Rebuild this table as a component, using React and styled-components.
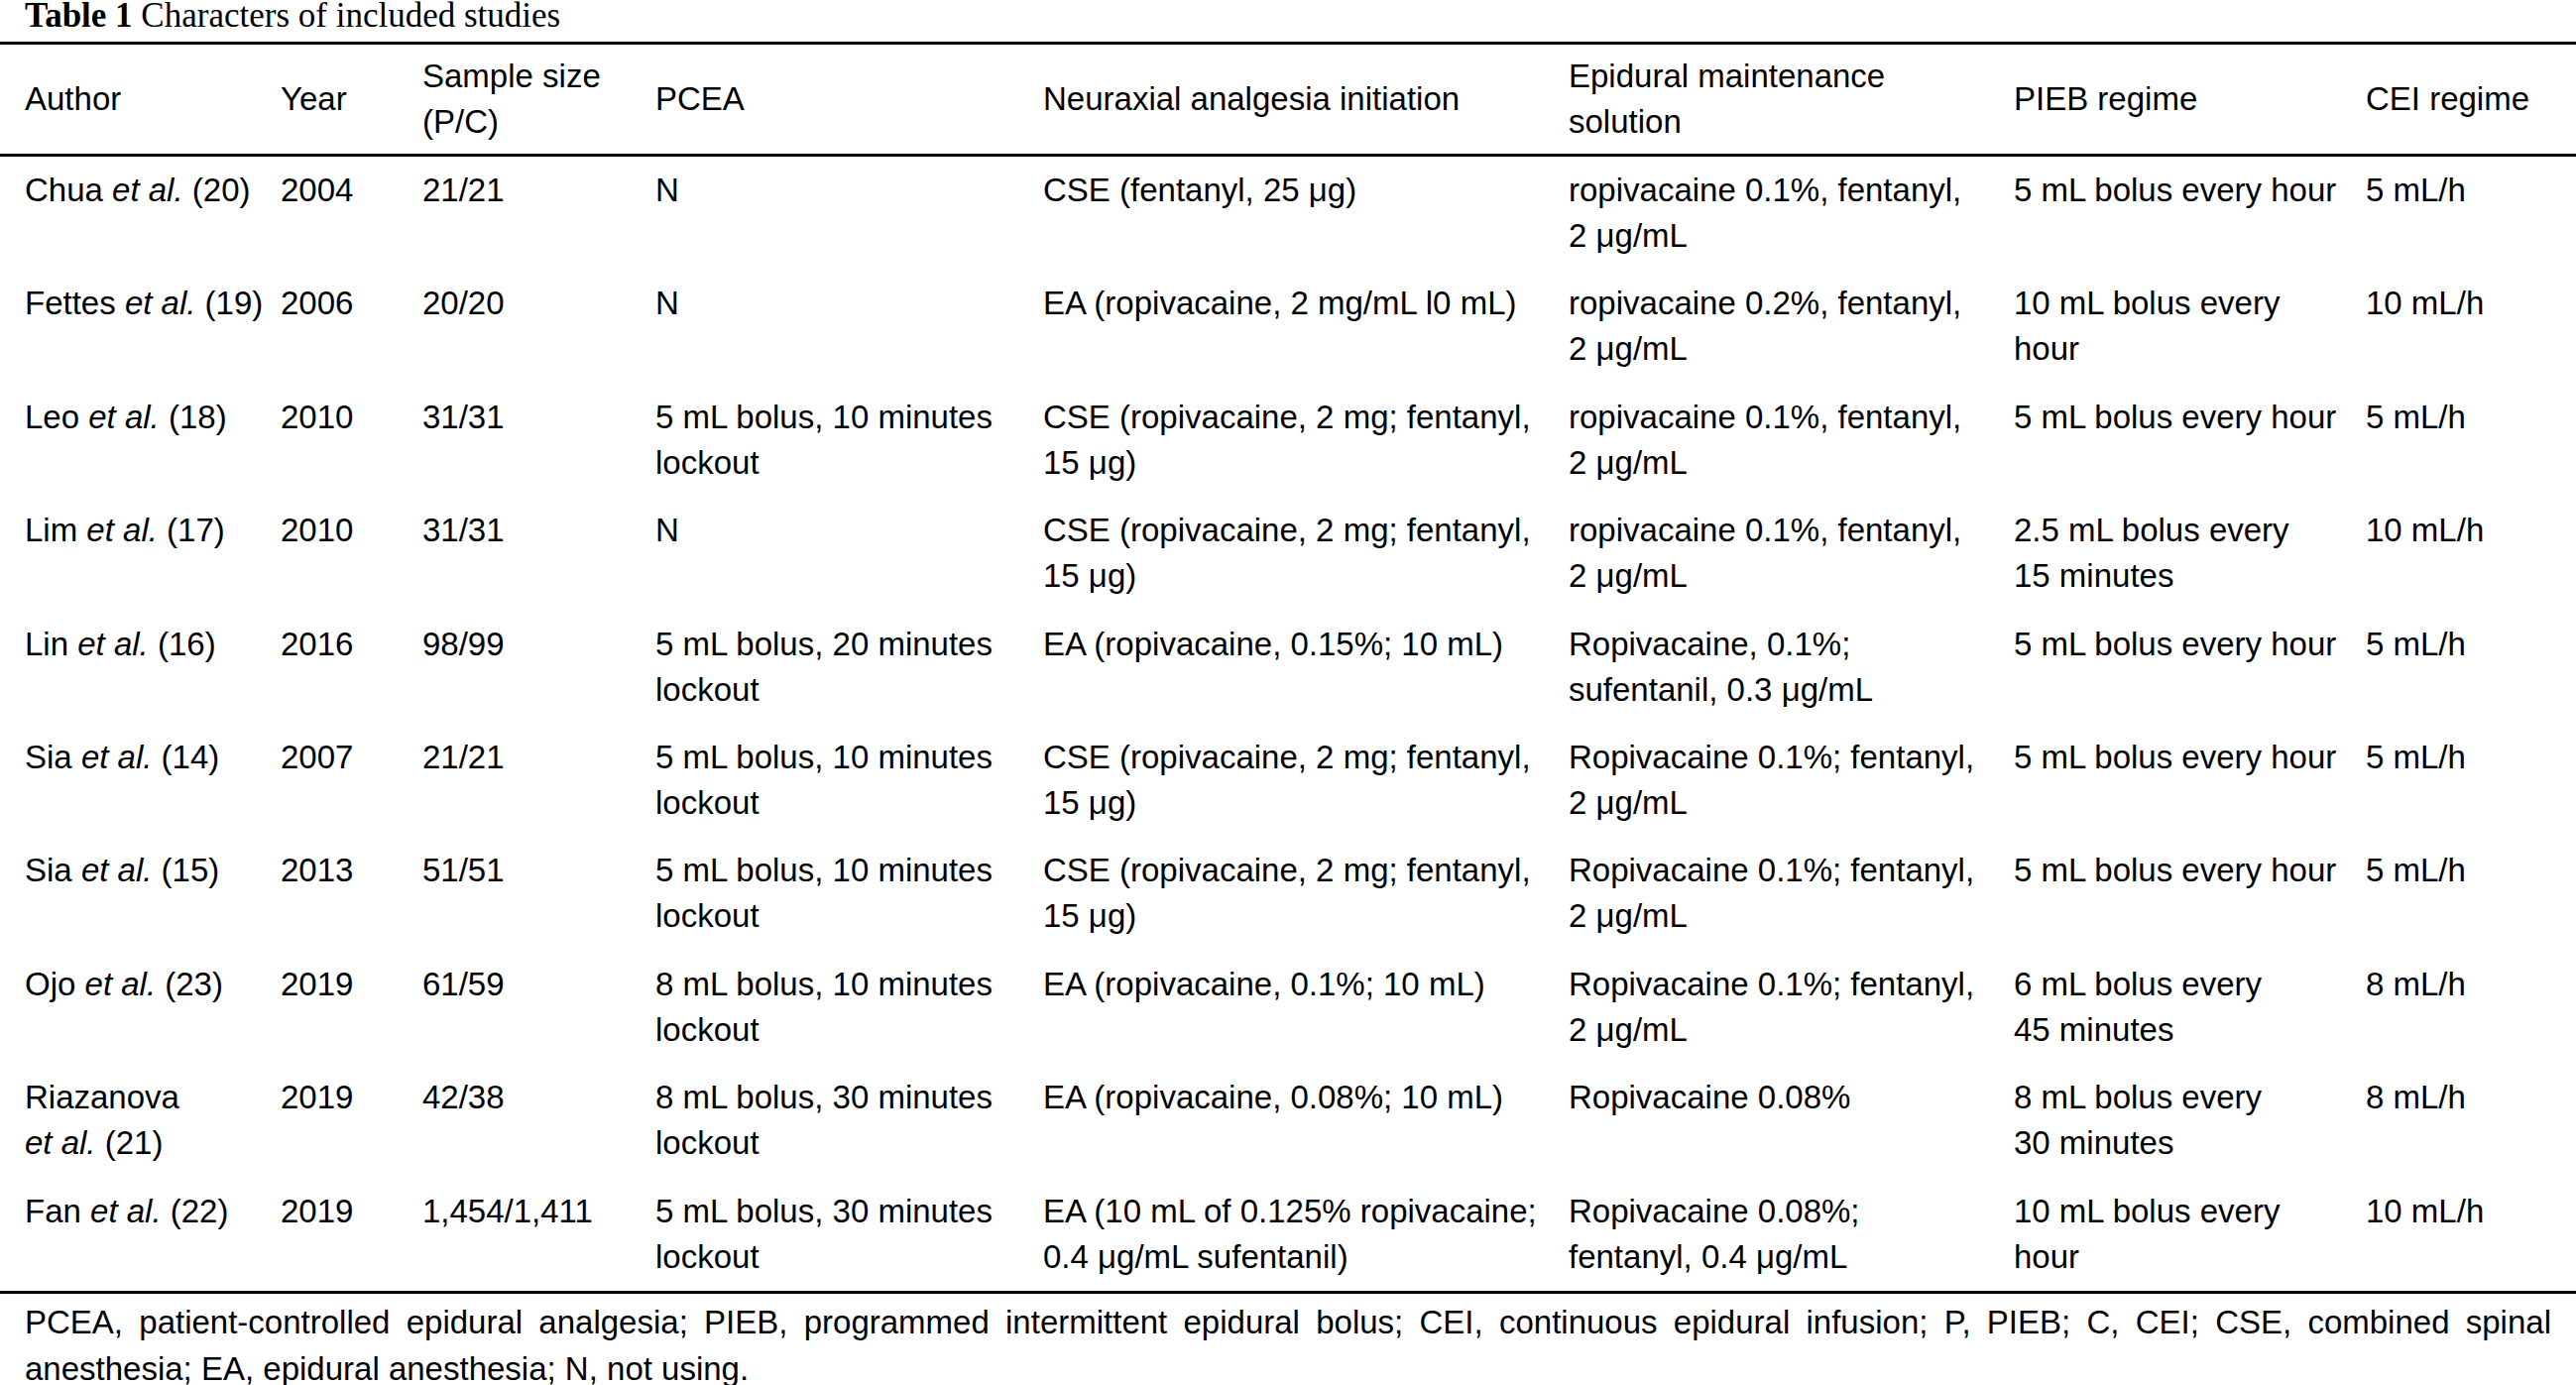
import React from 'react';
import styled, { createGlobalStyle } from 'styled-components';

const GlobalStyle = createGlobalStyle`
  html, body {
    margin: 0;
    padding: 0;
    background: #ffffff;
  }
  body {
    font-family: "Liberation Sans", Arial, sans-serif;
    color: #000;
  }
`;

const Page = styled.div`
  width: 2598px;
`;

const Caption = styled.div`
  height: 42px;
  padding-left: 25px;
  font-family: "Liberation Serif", "Times New Roman", serif;
  font-size: 35px;
  line-height: 32px;
  white-space: nowrap;

  b {
    font-weight: 700;
  }
`;

const Table = styled.table`
  width: 100%;
  table-layout: fixed;
  border-collapse: collapse;
  border-top: 3px solid #000;
  border-bottom: 3px solid #000;
  font-size: 33px;
  line-height: 46px;
`;

const HeadRow = styled.tr`
  border-bottom: 3px solid #000;
`;

const HeadCell = styled.th`
  text-align: left;
  font-weight: 400;
  vertical-align: middle;
  white-space: nowrap;
  padding: 9px 0 9px ${p => (p.$first ? '25px' : '0')};
`;

const Cell = styled.td`
  vertical-align: top;
  white-space: nowrap;
  padding: 11px 0 11.4px ${p => (p.$first ? '25px' : '0')};
`;

const Footnote = styled.div`
  padding: 5px 25px 0;
  font-size: 33px;
  line-height: 47px;
`;

const FootLine = styled.div`
  text-align: ${p => (p.$justify ? 'justify' : 'left')};
  text-align-last: ${p => (p.$justify ? 'justify' : 'left')};
  white-space: nowrap;
`;

const columns = [283, 143, 235, 391, 530, 449, 355, 212];

const headers = [
  ['Author'],
  ['Year'],
  ['Sample size', '(P/C)'],
  ['PCEA'],
  ['Neuraxial analgesia initiation'],
  ['Epidural maintenance', 'solution'],
  ['PIEB regime'],
  ['CEI regime'],
];

const author = (name, ref) => (
  <>
    {name} <em>et al.</em> ({ref})
  </>
);

const CSE_ROPI = ['CSE (ropivacaine, 2 mg; fentanyl,', '15 μg)'];

const rows = [
  [[author('Chua', 20)], ['2004'], ['21/21'], ['N'], ['CSE (fentanyl, 25 μg)'], ['ropivacaine 0.1%, fentanyl,', '2 μg/mL'], ['5 mL bolus every hour'], ['5 mL/h']],
  [[author('Fettes', 19)], ['2006'], ['20/20'], ['N'], ['EA (ropivacaine, 2 mg/mL l0 mL)'], ['ropivacaine 0.2%, fentanyl,', '2 μg/mL'], ['10 mL bolus every', 'hour'], ['10 mL/h']],
  [[author('Leo', 18)], ['2010'], ['31/31'], ['5 mL bolus, 10 minutes', 'lockout'], CSE_ROPI, ['ropivacaine 0.1%, fentanyl,', '2 μg/mL'], ['5 mL bolus every hour'], ['5 mL/h']],
  [[author('Lim', 17)], ['2010'], ['31/31'], ['N'], CSE_ROPI, ['ropivacaine 0.1%, fentanyl,', '2 μg/mL'], ['2.5 mL bolus every', '15 minutes'], ['10 mL/h']],
  [[author('Lin', 16)], ['2016'], ['98/99'], ['5 mL bolus, 20 minutes', 'lockout'], ['EA (ropivacaine, 0.15%; 10 mL)'], ['Ropivacaine, 0.1%;', 'sufentanil, 0.3 μg/mL'], ['5 mL bolus every hour'], ['5 mL/h']],
  [[author('Sia', 14)], ['2007'], ['21/21'], ['5 mL bolus, 10 minutes', 'lockout'], CSE_ROPI, ['Ropivacaine 0.1%; fentanyl,', '2 μg/mL'], ['5 mL bolus every hour'], ['5 mL/h']],
  [[author('Sia', 15)], ['2013'], ['51/51'], ['5 mL bolus, 10 minutes', 'lockout'], CSE_ROPI, ['Ropivacaine 0.1%; fentanyl,', '2 μg/mL'], ['5 mL bolus every hour'], ['5 mL/h']],
  [[author('Ojo', 23)], ['2019'], ['61/59'], ['8 mL bolus, 10 minutes', 'lockout'], ['EA (ropivacaine, 0.1%; 10 mL)'], ['Ropivacaine 0.1%; fentanyl,', '2 μg/mL'], ['6 mL bolus every', '45 minutes'], ['8 mL/h']],
  [['Riazanova', <><em>et al.</em> (21)</>], ['2019'], ['42/38'], ['8 mL bolus, 30 minutes', 'lockout'], ['EA (ropivacaine, 0.08%; 10 mL)'], ['Ropivacaine 0.08%'], ['8 mL bolus every', '30 minutes'], ['8 mL/h']],
  [[author('Fan', 22)], ['2019'], ['1,454/1,411'], ['5 mL bolus, 30 minutes', 'lockout'], ['EA (10 mL of 0.125% ropivacaine;', '0.4 μg/mL sufentanil)'], ['Ropivacaine 0.08%;', 'fentanyl, 0.4 μg/mL'], ['10 mL bolus every', 'hour'], ['10 mL/h']],
];

const Lines = ({ lines }) =>
  lines.map((line, i) => (
    <React.Fragment key={i}>
      {i > 0 && <br />}
      {line}
    </React.Fragment>
  ));

const App = () => (
  <Page>
    <GlobalStyle />
    <Caption>
      <b>Table 1</b> Characters of included studies
    </Caption>
    <Table>
      <colgroup>
        {columns.map((w, i) => (
          <col key={i} style={{ width: `${w}px` }} />
        ))}
      </colgroup>
      <thead>
        <HeadRow>
          {headers.map((h, i) => (
            <HeadCell key={i} $first={i === 0}>
              <Lines lines={h} />
            </HeadCell>
          ))}
        </HeadRow>
      </thead>
      <tbody>
        {rows.map((row, r) => (
          <tr key={r}>
            {row.map((cell, c) => (
              <Cell key={c} $first={c === 0}>
                <Lines lines={cell} />
              </Cell>
            ))}
          </tr>
        ))}
      </tbody>
    </Table>
    <Footnote>
      <FootLine $justify>
        PCEA, patient-controlled epidural analgesia; PIEB, programmed intermittent epidural bolus; CEI, continuous epidural infusion; P, PIEB; C, CEI; CSE, combined spinal
      </FootLine>
      <FootLine>anesthesia; EA, epidural anesthesia; N, not using.</FootLine>
    </Footnote>
  </Page>
);

export default App;
